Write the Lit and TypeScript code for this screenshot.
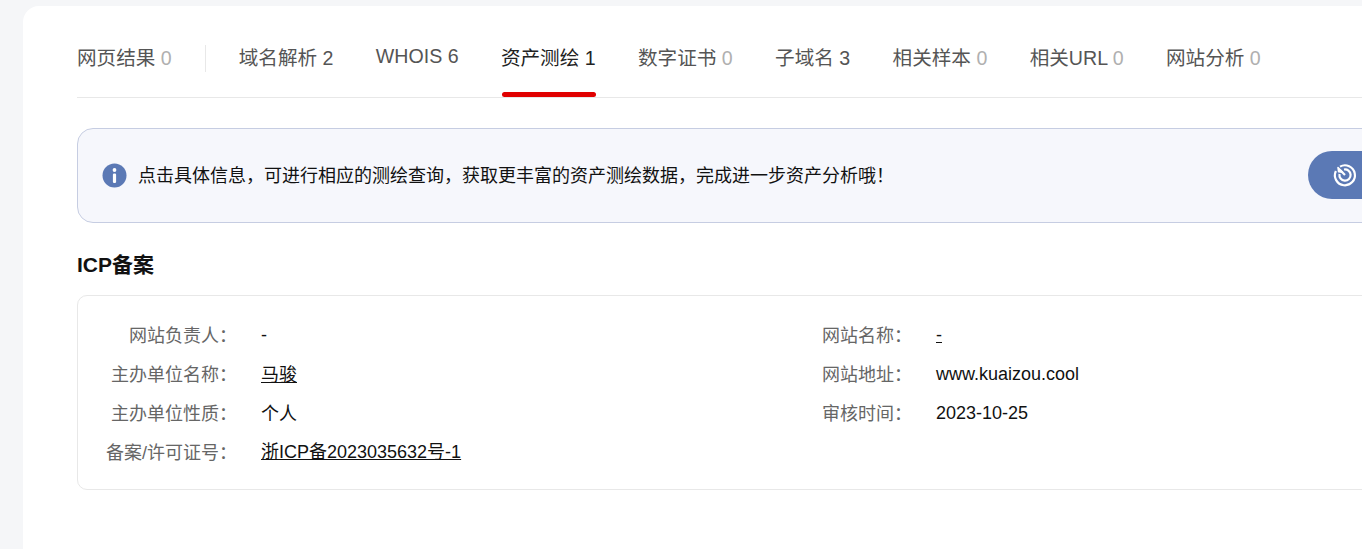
import { LitElement, html, css } from "lit";
import { customElement } from "lit/decorators.js";

const tabs: [string, number, boolean][] = [
  ["域名解析", 2, true],
  ["WHOIS", 6, true],
  ["资产测绘", 1, true],
  ["数字证书", 0, false],
  ["子域名", 3, true],
  ["相关样本", 0, false],
  ["相关URL", 0, false],
  ["网站分析", 0, false],
];

const C = "\uFF1A";
const COMMA = "\uFF0C";
const BANG = "\uFF01";
const notice = `点击具体信息${COMMA}可进行相应的测绘查询${COMMA}获取更丰富的资产测绘数据${COMMA}完成进一步资产分析哦${BANG}`;

type Cell = [string, string, string];
const rows: Cell[][] = [
  [["网站负责人" + C, "-", ""], ["网站名称" + C, "-", "link"]],
  [["主办单位名称" + C, "马骏", "link cjk"], ["网站地址" + C, "www.kuaizou.cool", ""]],
  [["主办单位性质" + C, "个人", "cjk"], ["审核时间" + C, "2023-10-25", ""]],
  [["备案/许可证号" + C, "浙ICP备2023035632号-1", "link"], ["", "", ""]],
];

@customElement("app-root")
export class AppRoot extends LitElement {
  static styles = css`
    :host {
      display: block;
      width: 1362px;
      height: 549px;
      overflow: hidden;
      background: #f5f6f8;
      font-family: "Liberation Sans", "Noto Sans CJK SC", sans-serif;
      color: #111;
    }
    .card {
      box-sizing: border-box;
      margin: 6px 0 0 23px;
      width: 1500px;
      height: 543px;
      padding: 0 0 0 54px;
      background: #fff;
      border-radius: 16px 0 0 0;
    }
    .tabs {
      box-sizing: border-box;
      width: 1348px;
      height: 92px;
      display: flex;
      align-items: flex-start;
      border-bottom: 1px solid #e8e8e8;
      font-size: 19.6px;
      line-height: 26px;
      color: #555;
      padding-top: 39px;
    }
    .tab {
      position: relative;
      height: 52px;
      margin-right: 42.35px;
      box-sizing: border-box;
      white-space: nowrap;
    }
    .tab.latin { margin-top: -2px; }
    .tab.first { margin-right: 33px; }
    .zero { color: #b0b0b0; }
    .tab.active { color: #222; }
    .tab.active::after {
      content: "";
      position: absolute;
      left: 1px;
      right: 0;
      top: 47px;
      height: 5px;
      background: #e00000;
      border-radius: 3px;
    }
    .divider {
      width: 1px;
      height: 27px;
      margin-right: 33px;
      background: #e8e8e8;
    }
    .alert {
      box-sizing: border-box;
      width: 1348px;
      height: 95px;
      margin-top: 30px;
      padding: 0 0 1px 24px;
      display: flex;
      align-items: center;
      background: #f6f7fc;
      border: 1px solid #c6cde2;
      border-radius: 16px;
      font-size: 18px;
      color: #111;
    }
    .info-icon { flex: none; width: 25px; height: 25px; margin-right: 11px; }
    .alert-text { flex: 1; margin-bottom: 3px; }
    .go {
      flex: none;
      width: 116px;
      height: 48px;
      padding-left: 23px;
      box-sizing: border-box;
      display: flex;
      align-items: center;
      background: #5b79b5;
      border-radius: 24px 0 0 24px;
    }
    .go svg { width: 28px; height: 28px; }
    h2 {
      margin: 26px 0 0;
      font-size: 21px;
      line-height: 32px;
      font-weight: 700;
      color: #111;
    }
    .box {
      box-sizing: border-box;
      width: 1348px;
      height: 195px;
      margin-top: 14px;
      padding: 20px 0 0;
      border: 1px solid #e8e8e8;
      border-radius: 10px;
      display: grid;
      grid-template-columns: 675px 660px;
      grid-auto-rows: 39px;
      font-size: 18px;
      line-height: 39px;
    }
    .cell { display: flex; align-items: flex-start; }
    .label {
      width: 159px;
      padding-top: 1px;
      text-align: right;
      color: #666;
      margin-right: 24px;
      white-space: nowrap;
    }
    .value { color: #111; }
    .value.cjk { padding-top: 1px; }
    .value.link { text-decoration: underline; text-underline-offset: 1px; }
  `;

  render() {
    return html`
      <div class="card">
        <div class="tabs">
          <div class="tab first">网页结果 <span class="zero">0</span></div>
          <div class="divider"></div>
          ${tabs.map(
            ([name, n, has]) => html`<div
              class="tab ${name === "资产测绘" ? "active" : ""} ${name === "WHOIS" ? "latin" : ""}"
            >${name} <span class=${has ? "" : "zero"}>${n}</span></div>`
          )}
        </div>
        <div class="alert">
          <svg class="info-icon" viewBox="0 0 25 25">
            <circle cx="12.5" cy="12.5" r="12" fill="#5b79b5" />
            <circle cx="12.5" cy="7" r="1.9" fill="#fff" />
            <rect x="10.9" y="10.5" width="3.2" height="9.5" rx="1.2" fill="#fff" />
          </svg>
          <div class="alert-text">${notice}</div>
          <div class="go">
            <svg viewBox="0 0 28 28" fill="none" stroke="#fff" stroke-width="2.2">
              <path d="M9 5.6 A10 10 0 1 1 4.9 10" />
              <path d="M13 8.5 A5.6 5.6 0 1 1 8.5 13" />
              <path d="M7 6.5 L7.6 10.6 L11.6 11.2 Z" fill="#fff" stroke-linejoin="round" stroke-width="1.6" />
              <path d="M9 9 L14 14" />
            </svg>
          </div>
        </div>
        <h2>ICP备案</h2>
        <div class="box">
          ${rows.map((r) =>
            r.map(
              ([l, v, cls]) => html`<div class="cell">
                ${l
                  ? html`<div class="label">${l}</div>
                      <div class="value ${cls}">${v}</div>`
                  : ""}
              </div>`
            )
          )}
        </div>
      </div>
    `;
  }
}
